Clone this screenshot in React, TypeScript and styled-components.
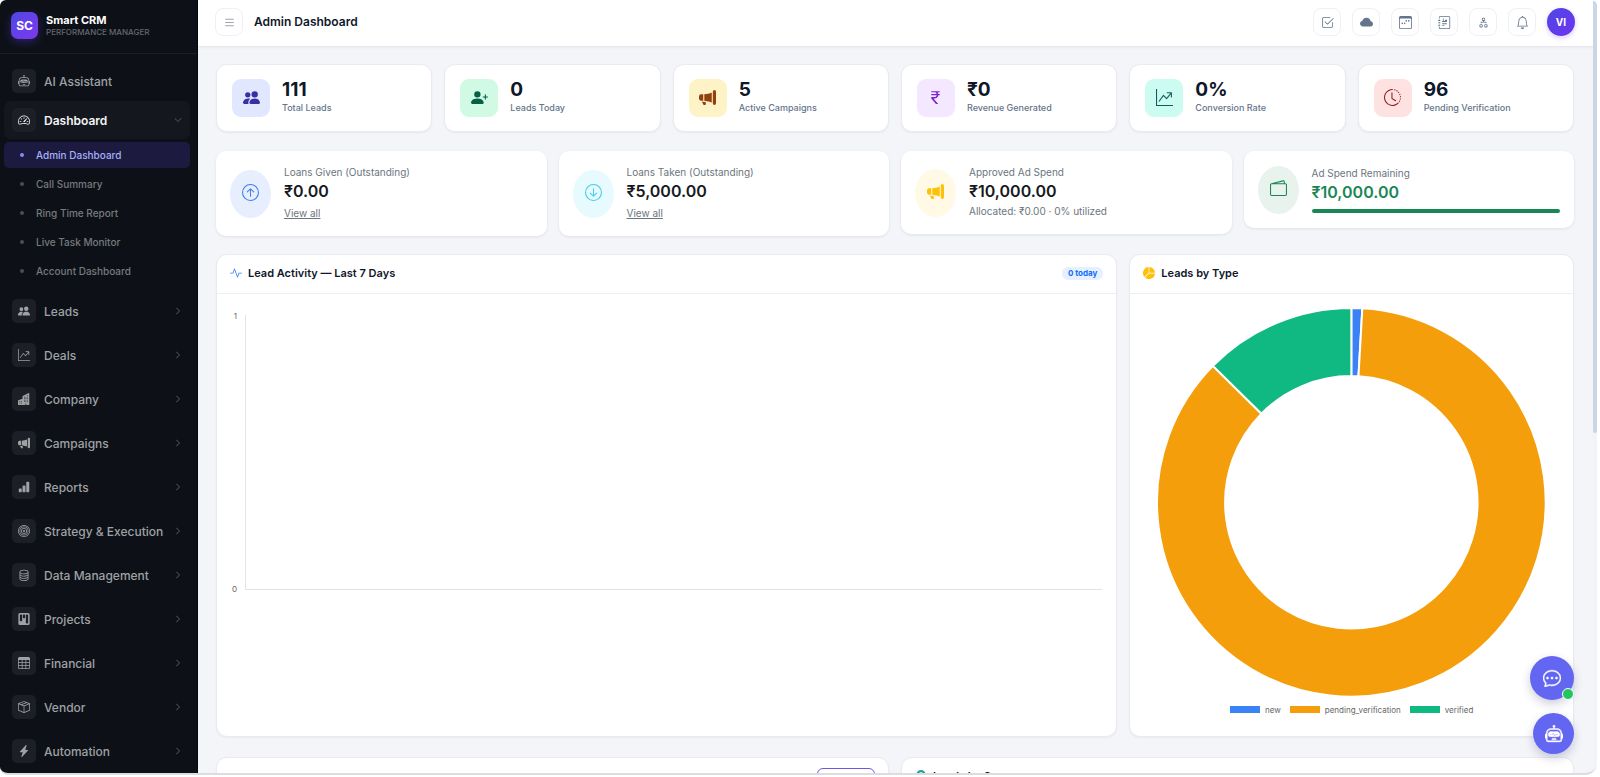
import React from 'react';
import styled, { createGlobalStyle, css } from 'styled-components';
import {
  BsRobot, BsSpeedometer2, BsPeopleFill, BsGraphUpArrow, BsBuildingsFill, BsMegaphoneFill,
  BsBarChartFill, BsBullseye, BsDatabase, BsKanbanFill, BsTable, BsBoxSeam,
  BsLightningChargeFill, BsChevronRight, BsChevronDown, BsList, BsCheck2Square, BsCloudFill,
  BsCalendar3Week, BsJournalRichtext, BsDiagram2, BsBell, BsPersonPlusFill, BsCurrencyRupee,
  BsClockHistory, BsArrowUpCircle, BsArrowDownCircle, BsWallet2, BsActivity, BsPieChartFill,
  BsChatDots, BsGeoAltFill,
} from 'react-icons/bs';

const Global = createGlobalStyle`
  * { box-sizing: border-box; }
  html, body { margin: 0; height: 100%; overflow: hidden; background: #fff; }
  #root { height: 100%; }
  body, button { font-family: Inter, "Liberation Sans", sans-serif; }
  button { cursor: pointer; padding: 0; }
  h1, h2, p { margin: 0; }
  svg { display: block; flex: none; }
`;

const Frame = styled.div`
  display: flex;
  height: calc(100vh - 2px);
  margin-right: 3px;
  overflow: hidden;
  border-bottom: 2px solid #dcdde0;
  border-radius: 6px 6px 12px 8px;
  background: #f3f5f9;
  color: #0f172a;
`;

const Sidebar = styled.aside`
  flex: none;
  width: 198px;
  overflow: hidden;
  background: #0d1117;
  border-right: 1px solid #05070a;
`;

const Brand = styled.div`
  display: flex;
  align-items: center;
  gap: 8px;
  height: 54px;
  padding: 0 11px 2px;
  border-bottom: 1px solid #1a1e25;
`;

const BrandMark = styled.div`
  display: grid;
  place-items: center;
  width: 27px;
  height: 27px;
  border-radius: 7px;
  background: linear-gradient(135deg, #4f46e5, #7c3aed);
  box-shadow: 0 3px 8px rgba(99, 60, 240, 0.35);
  color: #fff;
  font-size: 12px;
  font-weight: 700;
`;

const BrandName = styled.div`
  color: #fff;
  font-size: 11px;
  line-height: 13px;
  font-weight: 700;
`;

const BrandSub = styled.div`
  color: #64686f;
  font-size: 8px;
  line-height: 10px;
  font-weight: 500;
`;

const Nav = styled.nav`
  display: flex;
  flex-direction: column;
  gap: 8px;
  padding: 8px 7px 0 4px;
`;

const NavList = styled.div<{ $gap: number }>`
  display: flex;
  flex-direction: column;
  gap: ${p => p.$gap}px;
`;

const NavItem = styled.button<{ $open?: boolean }>`
  display: flex;
  align-items: center;
  gap: 8px;
  width: 100%;
  height: 38px;
  padding: 0 8px;
  border: 0;
  border-radius: 7px;
  background: ${p => (p.$open ? '#14181e' : 'transparent')};
  color: ${p => (p.$open ? '#f3f4f6' : '#9fa1a4')};
  font-size: 12px;
  font-weight: ${p => (p.$open ? 600 : 500)};
  text-align: left;
`;

const NavIcon = styled.span`
  display: grid;
  place-items: center;
  width: 24px;
  height: 24px;
  border-radius: 5px;
  background: #1c2026;
  font-size: 12px;
`;

const NavLabel = styled.span`
  flex: 1;
  white-space: nowrap;
`;

const Chevron = styled.span`
  font-size: 8px;
  color: #6c7076;
`;

const SubNav = styled.div`
  display: flex;
  flex-direction: column;
  gap: 3px;
  padding-top: 2px;
`;

const SubItem = styled.a<{ $active?: boolean }>`
  display: flex;
  align-items: center;
  gap: 12px;
  height: 26px;
  padding-left: 16px;
  border-radius: 5px;
  background: ${p => (p.$active ? '#1c1b3f' : 'transparent')};
  color: ${p => (p.$active ? '#a5b0fb' : '#777a7e')};
  font-size: 10px;
  font-weight: 500;
  text-decoration: none;
  &::before {
    content: '';
    width: 4px;
    height: 4px;
    border-radius: 50%;
    background: ${p => (p.$active ? '#818cf8' : '#4a4e54')};
  }
`;

const Main = styled.div`
  flex: 1;
  min-width: 0;
  display: flex;
  flex-direction: column;
`;

const TopBar = styled.header`
  display: flex;
  align-items: center;
  flex: none;
  height: 47px;
  padding: 0 18px 2px 17px;
  background: #fff;
  border-bottom: 1px solid #e6e8ec;
  box-shadow: 0 1px 3px rgba(15, 23, 42, 0.04);
`;

const IconButton = styled.button<{ $muted?: boolean }>`
  display: grid;
  place-items: center;
  width: 28px;
  height: 28px;
  border: 1px solid #edf0f4;
  border-radius: 8px;
  background: #fff;
  color: ${p => (p.$muted ? '#a0a5ae' : '#64748b')};
  font-size: 13px;
`;

const PageTitle = styled.h1`
  margin-left: 11px;
  font-size: 12px;
  line-height: 16px;
  font-weight: 600;
`;

const Actions = styled.div`
  display: flex;
  gap: 11px;
  margin-left: auto;
`;

const Avatar = styled.button`
  width: 28px;
  height: 28px;
  border: 0;
  border-radius: 50%;
  background: linear-gradient(135deg, #4f46e5, #6d35ee);
  box-shadow: 0 2px 5px rgba(99, 60, 240, 0.25);
  color: #fff;
  font-size: 10px;
  font-weight: 700;
`;

const Scroller = styled.div`
  flex: 1;
  min-height: 0;
  overflow: hidden;
  padding: 17px 19px 0 18px;
`;

const cardBase = css`
  background: #fff;
  border: 1px solid #e9ebf0;
  border-radius: 11px;
  box-shadow: 0 1px 2px rgba(15, 23, 42, 0.05);
`;

const StatGrid = styled.section`
  display: grid;
  grid-template-columns: repeat(6, 1fr);
  gap: 12px;
  margin-bottom: 19px;
`;

const StatCard = styled.article`
  ${cardBase}
  display: flex;
  gap: 12px;
  height: 68px;
  padding: 14px 15px;
`;

const StatIcon = styled.div<{ $bg: string; $fg: string }>`
  display: grid;
  place-items: center;
  width: 38px;
  height: 38px;
  padding-bottom: 2px;
  border-radius: 9px;
  background: ${p => p.$bg};
  color: ${p => p.$fg};
  font-size: 17px;
`;

const StatValue = styled.p`
  font-size: 19px;
  line-height: 21px;
  font-weight: 700;
`;

const StatLabel = styled.p`
  font-size: 9px;
  line-height: 15px;
  font-weight: 500;
  color: #64748b;
`;

const FinanceGrid = styled.section`
  display: grid;
  grid-template-columns: repeat(4, 1fr);
  align-items: start;
  gap: 12px;
  margin-bottom: 18px;
`;

const FinanceCard = styled.article`
  display: flex;
  align-items: center;
  gap: 13px;
  min-height: 77px;
  padding: 14px;
  background: #fff;
  border-radius: 10px;
  box-shadow: 0 1px 3px rgba(15, 23, 42, 0.09);
`;

const FinanceIcon = styled.div<{ $bg: string; $fg: string }>`
  display: grid;
  place-items: center;
  flex: none;
  width: 41px;
  height: 48px;
  padding-bottom: 2px;
  border-radius: 50%;
  background: ${p => p.$bg};
  color: ${p => p.$fg};
  font-size: 17px;
`;

const FinanceBody = styled.div`
  flex: 1;
`;

const Caption = styled.p`
  font-size: 10px;
  line-height: 15px;
  color: #6c757d;
`;

const Note = styled(Caption)`
  line-height: 18px;
`;

const Amount = styled.p<{ $green?: boolean }>`
  font-size: 16px;
  line-height: 22px;
  font-weight: 600;
  color: ${p => (p.$green ? '#198754' : '#17191d')};
`;

const ViewAll = styled.a`
  display: block;
  padding-top: 2px;
  font-size: 10px;
  line-height: 18px;
  color: #6c757d;
  text-decoration: underline;
`;

const Meter = styled.div`
  height: 4px;
  margin-top: 6px;
  border-radius: 2px;
  background: #198754;
`;

const ChartGrid = styled.section`
  display: grid;
  grid-template-columns: 900fr 444fr;
  gap: 12px;
  margin-bottom: 20px;
`;

const Panel = styled.article`
  ${cardBase}
  min-width: 0;
`;

const PanelHead = styled.header`
  display: flex;
  align-items: center;
  gap: 6px;
  height: 39px;
  padding: 0 13px 2px;
  border-bottom: 1px solid #eceef2;
`;

const HeadIcon = styled.span<{ $fg: string }>`
  font-size: 12px;
  color: ${p => p.$fg};
`;

const PanelTitle = styled.h2`
  font-size: 11px;
  line-height: 16px;
  font-weight: 600;
`;

const Pill = styled.span`
  margin-left: auto;
  padding: 0 6px;
  border-radius: 6px;
  background: #e7f0ff;
  color: #0d6efd;
  font-size: 8px;
  line-height: 13px;
  font-weight: 700;
`;

const Plot = styled.div`
  display: grid;
  grid-template-columns: 8px 1fr;
  column-gap: 8px;
  margin: 21px 14px 0 12px;
  height: 275px;
`;

const Ticks = styled.div`
  display: flex;
  flex-direction: column;
  justify-content: space-between;
  margin: -4px 0;
  text-align: right;
  font-size: 8px;
  line-height: 10px;
  color: #666;
`;

const PlotArea = styled.div`
  border-left: 1px solid #e5e5e5;
  border-bottom: 1px solid #e2e2e2;
`;

const DonutBody = styled.div`
  padding: 14px 27px 21px;
`;

const Donut = styled.svg`
  width: 100%;
  height: auto;
`;

const Legend = styled.div`
  display: flex;
  justify-content: center;
  gap: 9px;
  margin-top: 8px;
  font-size: 8px;
  line-height: 10px;
  color: #666;
`;

const LegendItem = styled.span<{ $c: string }>`
  display: flex;
  align-items: center;
  gap: 5px;
  &::before {
    content: '';
    width: 30px;
    height: 7px;
    background: ${p => p.$c};
  }
`;

const BottomGrid = styled.section`
  display: grid;
  grid-template-columns: 1fr 1fr;
  gap: 12px;
`;

const OutlineButton = styled.button`
  width: 58px;
  height: 22px;
  margin: 6px 0 0 auto;
  border: 1px solid #6a5ae8;
  border-radius: 6px;
  background: #fff;
`;

const ScrollTrack = styled.div`
  flex: none;
  width: 4px;
  background: #f0f3f8;
`;

const ScrollThumb = styled.div`
  height: 56%;
  border-radius: 2px;
  background: #cbd5e5;
`;

const Floating = styled.div`
  position: fixed;
  right: 26px;
  bottom: 23px;
  display: flex;
  flex-direction: column;
  align-items: flex-end;
  gap: 13px;
`;

const Fab = styled.button<{ $size: number }>`
  position: relative;
  display: grid;
  place-items: center;
  width: ${p => p.$size}px;
  height: ${p => p.$size}px;
  border: 0;
  border-radius: 50%;
  background: #6366f1;
  box-shadow: 0 4px 10px rgba(60, 60, 120, 0.25);
  color: #fff;
  font-size: 18px;
  & > svg {
    stroke: #fff;
    stroke-width: 0.4;
  }
`;

const Online = styled.span`
  position: absolute;
  right: 0;
  bottom: 0;
  width: 12px;
  height: 12px;
  border: 1px solid #fff;
  border-radius: 50%;
  background: #22c55e;
`;

const subItems = ['Admin Dashboard', 'Call Summary', 'Ring Time Report', 'Live Task Monitor', 'Account Dashboard'];

const navItems = [
  { icon: <BsPeopleFill />, label: 'Leads' },
  { icon: <BsGraphUpArrow />, label: 'Deals' },
  { icon: <BsBuildingsFill />, label: 'Company' },
  { icon: <BsMegaphoneFill />, label: 'Campaigns' },
  { icon: <BsBarChartFill />, label: 'Reports' },
  { icon: <BsBullseye />, label: 'Strategy & Execution' },
  { icon: <BsDatabase />, label: 'Data Management' },
  { icon: <BsKanbanFill />, label: 'Projects' },
  { icon: <BsTable />, label: 'Financial' },
  { icon: <BsBoxSeam />, label: 'Vendor' },
  { icon: <BsLightningChargeFill />, label: 'Automation' },
];

const actions = [
  { icon: <BsCheck2Square />, label: 'Tasks' },
  { icon: <BsCloudFill />, label: 'Cloud' },
  { icon: <BsCalendar3Week />, label: 'Calendar' },
  { icon: <BsJournalRichtext />, label: 'Notes' },
  { icon: <BsDiagram2 />, label: 'Team' },
  { icon: <BsBell />, label: 'Notifications' },
];

const stats = [
  { icon: <BsPeopleFill />, bg: '#e0e7ff', fg: '#3730a3', value: '111', label: 'Total Leads' },
  { icon: <BsPersonPlusFill />, bg: '#d1fae5', fg: '#065f46', value: '0', label: 'Leads Today' },
  { icon: <BsMegaphoneFill />, bg: '#fef3c7', fg: '#92400e', value: '5', label: 'Active Campaigns' },
  { icon: <BsCurrencyRupee />, bg: '#f3e8ff', fg: '#7e22ce', value: '₹0', label: 'Revenue Generated' },
  { icon: <BsGraphUpArrow />, bg: '#ccfbf1', fg: '#115e59', value: '0%', label: 'Conversion Rate' },
  { icon: <BsClockHistory />, bg: '#fee2e2', fg: '#991b1b', value: '96', label: 'Pending Verification' },
];

const slices = [
  { name: 'new', value: 1, color: '#3b82f6' },
  { name: 'pending_verification', value: 96, color: '#f59e0b' },
  { name: 'verified', value: 14, color: '#10b981' },
];

const OUTER = 194;
const INNER = 126;

const point = (r: number, turn: number) => {
  const a = turn * 2 * Math.PI;
  return `${194 + r * Math.sin(a)} ${194 - r * Math.cos(a)}`;
};

function slicePath(from: number, to: number) {
  const large = to - from > 0.5 ? 1 : 0;
  return `M${point(OUTER, from)}A${OUTER} ${OUTER} 0 ${large} 1 ${point(OUTER, to)}L${point(INNER, to)}A${INNER} ${INNER} 0 ${large} 0 ${point(INNER, from)}Z`;
}

function LeadsDonut() {
  const total = slices.reduce((s, x) => s + x.value, 0);
  let start = 0;
  return (
    <Donut viewBox="0 0 388 388" role="img" aria-label="Leads by type">
      {slices.map(s => {
        const from = start;
        start += s.value / total;
        return <path key={s.name} d={slicePath(from, start)} fill={s.color} stroke="#fff" strokeWidth="2" />;
      })}
    </Donut>
  );
}

export default function App() {
  return (
    <>
      <Global />
      <Frame>
        <Sidebar>
          <Brand>
            <BrandMark>SC</BrandMark>
            <div>
              <BrandName>Smart CRM</BrandName>
              <BrandSub>PERFORMANCE MANAGER</BrandSub>
            </div>
          </Brand>
          <Nav>
            <NavList $gap={1}>
              <NavItem>
                <NavIcon><BsRobot /></NavIcon>
                <NavLabel>AI Assistant</NavLabel>
              </NavItem>
              <NavItem $open aria-expanded>
                <NavIcon><BsSpeedometer2 /></NavIcon>
                <NavLabel>Dashboard</NavLabel>
                <Chevron><BsChevronDown /></Chevron>
              </NavItem>
              <SubNav>
                {subItems.map((t, i) => (
                  <SubItem key={t} href="#" $active={i === 0}>{t}</SubItem>
                ))}
              </SubNav>
            </NavList>
            <NavList $gap={6}>
              {navItems.map(n => (
                <NavItem key={n.label}>
                  <NavIcon>{n.icon}</NavIcon>
                  <NavLabel>{n.label}</NavLabel>
                  <Chevron><BsChevronRight /></Chevron>
                </NavItem>
              ))}
            </NavList>
          </Nav>
        </Sidebar>

        <Main>
          <TopBar>
            <IconButton $muted aria-label="Toggle menu"><BsList /></IconButton>
            <PageTitle>Admin Dashboard</PageTitle>
            <Actions>
              {actions.map(a => (
                <IconButton key={a.label} aria-label={a.label}>{a.icon}</IconButton>
              ))}
              <Avatar>VI</Avatar>
            </Actions>
          </TopBar>

          <Scroller>
            <StatGrid>
              {stats.map(s => (
                <StatCard key={s.label}>
                  <StatIcon $bg={s.bg} $fg={s.fg}>{s.icon}</StatIcon>
                  <div>
                    <StatValue>{s.value}</StatValue>
                    <StatLabel>{s.label}</StatLabel>
                  </div>
                </StatCard>
              ))}
            </StatGrid>

            <FinanceGrid>
              <FinanceCard>
                <FinanceIcon $bg="#e7effe" $fg="#3b7cf6"><BsArrowUpCircle /></FinanceIcon>
                <FinanceBody>
                  <Caption>Loans Given (Outstanding)</Caption>
                  <Amount>₹0.00</Amount>
                  <ViewAll href="#">View all</ViewAll>
                </FinanceBody>
              </FinanceCard>
              <FinanceCard>
                <FinanceIcon $bg="#e7fafe" $fg="#3fcdf0"><BsArrowDownCircle /></FinanceIcon>
                <FinanceBody>
                  <Caption>Loans Taken (Outstanding)</Caption>
                  <Amount>₹5,000.00</Amount>
                  <ViewAll href="#">View all</ViewAll>
                </FinanceBody>
              </FinanceCard>
              <FinanceCard>
                <FinanceIcon $bg="#fff9e6" $fg="#ffc107"><BsMegaphoneFill /></FinanceIcon>
                <FinanceBody>
                  <Caption>Approved Ad Spend</Caption>
                  <Amount>₹10,000.00</Amount>
                  <Note>Allocated: ₹0.00 · 0% utilized</Note>
                </FinanceBody>
              </FinanceCard>
              <FinanceCard>
                <FinanceIcon $bg="#e8f3ee" $fg="#198754"><BsWallet2 /></FinanceIcon>
                <FinanceBody>
                  <Caption>Ad Spend Remaining</Caption>
                  <Amount $green>₹10,000.00</Amount>
                  <Meter />
                </FinanceBody>
              </FinanceCard>
            </FinanceGrid>

            <ChartGrid>
              <Panel>
                <PanelHead>
                  <HeadIcon $fg="#3b7cf6"><BsActivity /></HeadIcon>
                  <PanelTitle>Lead Activity — Last 7 Days</PanelTitle>
                  <Pill>0 today</Pill>
                </PanelHead>
                <Plot>
                  <Ticks><span>1</span><span>0</span></Ticks>
                  <PlotArea />
                </Plot>
              </Panel>
              <Panel>
                <PanelHead>
                  <HeadIcon $fg="#ffc107"><BsPieChartFill /></HeadIcon>
                  <PanelTitle>Leads by Type</PanelTitle>
                </PanelHead>
                <DonutBody>
                  <LeadsDonut />
                  <Legend>
                    {slices.map(s => (
                      <LegendItem key={s.name} $c={s.color}>{s.name}</LegendItem>
                    ))}
                  </Legend>
                </DonutBody>
              </Panel>
            </ChartGrid>

            <BottomGrid>
              <Panel>
                <PanelHead><OutlineButton aria-label="View all" /></PanelHead>
              </Panel>
              <Panel>
                <PanelHead>
                  <HeadIcon $fg="#20a39a"><BsGeoAltFill /></HeadIcon>
                  <PanelTitle>Leads by Source</PanelTitle>
                </PanelHead>
              </Panel>
            </BottomGrid>
          </Scroller>
        </Main>
        <ScrollTrack><ScrollThumb /></ScrollTrack>
      </Frame>

      <Floating>
        <Fab $size={44} aria-label="Open chat"><BsChatDots /><Online /></Fab>
        <Fab $size={41} aria-label="Open assistant"><BsRobot /></Fab>
      </Floating>
    </>
  );
}
